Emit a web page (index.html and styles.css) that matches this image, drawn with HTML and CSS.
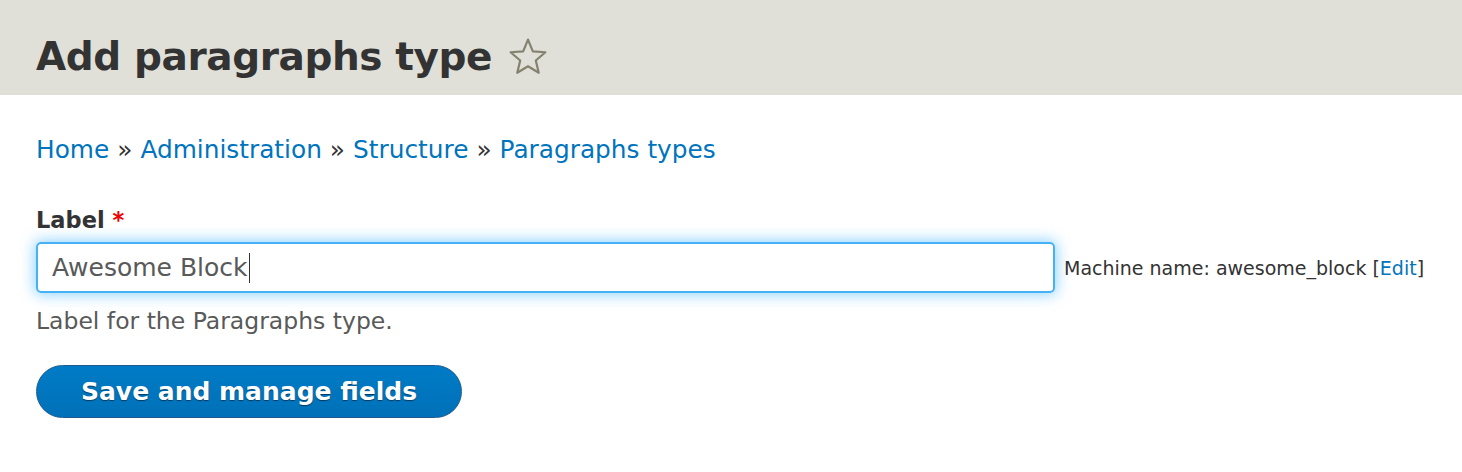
FILE: index.html
```html
<!DOCTYPE html>
<html lang="en">
<head>
<meta charset="utf-8">
<title>Add paragraphs type</title>
<link rel="stylesheet" href="styles.css">
</head>
<body>
<header class="page-header">
  <h1 class="page-title">Add paragraphs type
    <span class="shortcut" aria-label="Add to shortcuts">
      <svg width="40" height="40" viewBox="0 0 38 38"><path d="M19 2.5 L23.6 13.6 L35.5 14.5 L26.4 22.3 L29.2 34 L19 27.8 L8.8 34 L11.6 22.3 L2.5 14.5 L14.4 13.6 Z" fill="none" stroke="#868270" stroke-width="2.1" stroke-linejoin="round"/></svg>
    </span>
  </h1>
</header>
<main class="content">
  <nav class="breadcrumb">
    <a href="#">Home</a><span class="sep">»</span><a href="#">Administration</a><span class="sep">»</span><a href="#">Structure</a><span class="sep">»</span><a href="#">Paragraphs types</a>
  </nav>
  <form class="form">
    <div class="form-item">
      <label class="form-label">Label <span class="required">*</span></label>
      <div class="field-row">
        <div class="form-text" role="textbox">Awesome Block<span class="caret"></span></div>
        <span class="machine-name">Machine name: awesome_block [<a href="#">Edit</a>]</span>
      </div>
      <div class="description">Label for the Paragraphs type.</div>
    </div>
    <div class="actions">
      <button type="button" class="button-primary">Save and manage fields</button>
    </div>
  </form>
</main>
</body>
</html>
```

FILE: styles.css
```css
html, body {
  margin: 0;
  padding: 0;
  background: #fff;
}
body {
  font-family: "DejaVu Sans", "Liberation Sans", sans-serif;
  color: #333;
}
.page-header {
  background: #e0e0d8;
  height: 95px;
  padding: 0 36px;
  display: flex;
  align-items: flex-end;
}
.page-title {
  margin: 0 0 10px;
  font-size: 39px;
  font-weight: bold;
  color: #333;
  letter-spacing: -0.4px;
  display: flex;
  align-items: center;
  gap: 16px;
  line-height: 56px;
}
.shortcut {
  display: inline-flex;
}
.content {
  padding: 0 36px;
}
.breadcrumb {
  margin-top: 37px;
  font-size: 24.8px;
  line-height: 36px;
}
.breadcrumb a {
  color: #0074bd;
  text-decoration: none;
}
.breadcrumb .sep {
  color: #333;
  margin: 0 8px;
}
.form {
  margin-top: 37px;
}
.form-label {
  display: block;
  font-size: 22.5px;
  font-weight: bold;
  line-height: 30px;
  margin-bottom: 7px;
}
.required {
  color: #e00;
}
.field-row {
  display: flex;
  align-items: center;
  gap: 9px;
}
.form-text {
  box-sizing: border-box;
  width: 1019px;
  height: 51px;
  border: 2px solid #47b1f5;
  border-radius: 5px;
  box-shadow: 0 0 14px 2px rgba(64, 180, 255, 0.55);
  padding: 0 14px;
  font-size: 25px;
  color: #595959;
  display: flex;
  align-items: center;
}
.caret {
  display: inline-block;
  width: 1px;
  height: 30px;
  background: #333;
  margin-left: 1px;
}
.machine-name {
  font-size: 19px;
  color: #333;
  white-space: nowrap;
}
.machine-name a {
  color: #0074bd;
  text-decoration: none;
}
.description {
  margin-top: 12px;
  font-size: 23.5px;
  line-height: 32px;
  color: #595959;
}
.actions {
  margin-top: 28px;
}
.button-primary {
  box-sizing: border-box;
  width: 426px;
  height: 53px;
  border: 1px solid #1e5c90;
  border-radius: 27px;
  background: linear-gradient(#007bc6, #0071b8);
  color: #fff;
  font-family: inherit;
  font-size: 25px;
  font-weight: bold;
  text-shadow: 0 1px 1px rgba(0, 0, 0, 0.5);
  cursor: pointer;
  padding: 0;
}
```
